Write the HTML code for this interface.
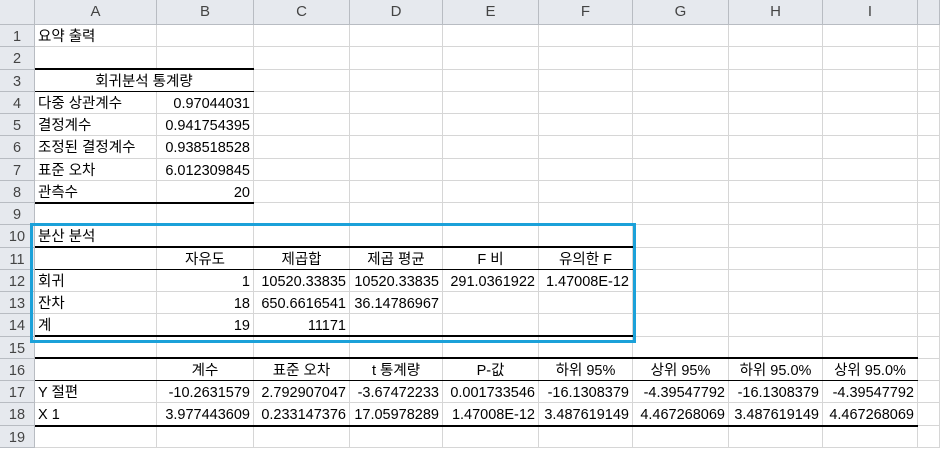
<!DOCTYPE html>
<html><head><meta charset="utf-8"><style>
body{margin:0;width:940px;height:447px;overflow:hidden;background:#fff;position:relative;font-family:"Liberation Sans","Noto Sans CJK KR",sans-serif;font-size:14.5px;color:#000}
.r{position:absolute;left:0;height:22.25px;display:flex}
.c{box-sizing:border-box;height:100%;border-right:1px solid #d6d6d6;border-bottom:1px solid #d6d6d6;padding:0 3px;line-height:25px;white-space:nowrap;overflow:visible}
.h{background:#e6e9ee;color:#444;text-align:center;border-color:#b8bcc2;font-size:15px}
.n{text-align:right}.ct{text-align:center}
.w0{width:35px}.wA{width:122px}.wB{width:97px}.wC{width:96px}.wD{width:93px}.wE{width:96px}.wF{width:94px}.wG{width:96px}.wH{width:94px}.wI{width:95px}.wJ{width:22px}
.rh{background:#e6e9ee;color:#444;text-align:center;border-color:#b8bcc2;padding:0}
.l{position:absolute;background:#000}
</style></head><body>
<div class="r" style="top:0;height:25px"><div class="c h w0"></div><div class="c h wA" style="line-height:24px">A</div><div class="c h wB" style="line-height:24px">B</div><div class="c h wC" style="line-height:24px">C</div><div class="c h wD" style="line-height:24px">D</div><div class="c h wE" style="line-height:24px">E</div><div class="c h wF" style="line-height:24px">F</div><div class="c h wG" style="line-height:24px">G</div><div class="c h wH" style="line-height:24px">H</div><div class="c h wI" style="line-height:24px">I</div><div class="c h wJ"></div></div>

<div class="r" style="top:25px"><div class="c rh w0">1</div><div class="c wA">요약 출력</div><div class="c wB"></div><div class="c wC"></div><div class="c wD"></div><div class="c wE"></div><div class="c wF"></div><div class="c wG"></div><div class="c wH"></div><div class="c wI"></div><div class="c wJ"></div></div>
<div class="r" style="top:47.25px"><div class="c rh w0">2</div><div class="c wA"></div><div class="c wB"></div><div class="c wC"></div><div class="c wD"></div><div class="c wE"></div><div class="c wF"></div><div class="c wG"></div><div class="c wH"></div><div class="c wI"></div><div class="c wJ"></div></div>
<div class="r" style="top:69.5px"><div class="c rh w0">3</div><div class="c wA ct" style="width:219px;overflow:visible">회귀분석 통계량</div><div class="c wC"></div><div class="c wD"></div><div class="c wE"></div><div class="c wF"></div><div class="c wG"></div><div class="c wH"></div><div class="c wI"></div><div class="c wJ"></div></div>
<div class="r" style="top:91.75px"><div class="c rh w0">4</div><div class="c wA">다중 상관계수</div><div class="c wB n">0.97044031</div><div class="c wC"></div><div class="c wD"></div><div class="c wE"></div><div class="c wF"></div><div class="c wG"></div><div class="c wH"></div><div class="c wI"></div><div class="c wJ"></div></div>
<div class="r" style="top:114px"><div class="c rh w0">5</div><div class="c wA">결정계수</div><div class="c wB n">0.941754395</div><div class="c wC"></div><div class="c wD"></div><div class="c wE"></div><div class="c wF"></div><div class="c wG"></div><div class="c wH"></div><div class="c wI"></div><div class="c wJ"></div></div>
<div class="r" style="top:136.25px"><div class="c rh w0">6</div><div class="c wA">조정된 결정계수</div><div class="c wB n">0.938518528</div><div class="c wC"></div><div class="c wD"></div><div class="c wE"></div><div class="c wF"></div><div class="c wG"></div><div class="c wH"></div><div class="c wI"></div><div class="c wJ"></div></div>
<div class="r" style="top:158.5px"><div class="c rh w0">7</div><div class="c wA">표준 오차</div><div class="c wB n">6.012309845</div><div class="c wC"></div><div class="c wD"></div><div class="c wE"></div><div class="c wF"></div><div class="c wG"></div><div class="c wH"></div><div class="c wI"></div><div class="c wJ"></div></div>
<div class="r" style="top:180.75px"><div class="c rh w0">8</div><div class="c wA">관측수</div><div class="c wB n">20</div><div class="c wC"></div><div class="c wD"></div><div class="c wE"></div><div class="c wF"></div><div class="c wG"></div><div class="c wH"></div><div class="c wI"></div><div class="c wJ"></div></div>
<div class="r" style="top:203px"><div class="c rh w0">9</div><div class="c wA"></div><div class="c wB"></div><div class="c wC"></div><div class="c wD"></div><div class="c wE"></div><div class="c wF"></div><div class="c wG"></div><div class="c wH"></div><div class="c wI"></div><div class="c wJ"></div></div>
<div class="r" style="top:225.25px"><div class="c rh w0">10</div><div class="c wA">분산 분석</div><div class="c wB"></div><div class="c wC"></div><div class="c wD"></div><div class="c wE"></div><div class="c wF"></div><div class="c wG"></div><div class="c wH"></div><div class="c wI"></div><div class="c wJ"></div></div>
<div class="r" style="top:247.5px"><div class="c rh w0">11</div><div class="c wA"></div><div class="c wB ct">자유도</div><div class="c wC ct">제곱합</div><div class="c wD ct">제곱 평균</div><div class="c wE ct">F 비</div><div class="c wF ct">유의한 F</div><div class="c wG"></div><div class="c wH"></div><div class="c wI"></div><div class="c wJ"></div></div>
<div class="r" style="top:269.75px"><div class="c rh w0">12</div><div class="c wA">회귀</div><div class="c wB n">1</div><div class="c wC n">10520.33835</div><div class="c wD n">10520.33835</div><div class="c wE n">291.0361922</div><div class="c wF n">1.47008E-12</div><div class="c wG"></div><div class="c wH"></div><div class="c wI"></div><div class="c wJ"></div></div>
<div class="r" style="top:292px"><div class="c rh w0">13</div><div class="c wA">잔차</div><div class="c wB n">18</div><div class="c wC n">650.6616541</div><div class="c wD n">36.14786967</div><div class="c wE"></div><div class="c wF"></div><div class="c wG"></div><div class="c wH"></div><div class="c wI"></div><div class="c wJ"></div></div>
<div class="r" style="top:314.25px"><div class="c rh w0">14</div><div class="c wA">계</div><div class="c wB n">19</div><div class="c wC n">11171</div><div class="c wD"></div><div class="c wE"></div><div class="c wF"></div><div class="c wG"></div><div class="c wH"></div><div class="c wI"></div><div class="c wJ"></div></div>
<div class="r" style="top:336.5px"><div class="c rh w0">15</div><div class="c wA"></div><div class="c wB"></div><div class="c wC"></div><div class="c wD"></div><div class="c wE"></div><div class="c wF"></div><div class="c wG"></div><div class="c wH"></div><div class="c wI"></div><div class="c wJ"></div></div>
<div class="r" style="top:358.75px"><div class="c rh w0">16</div><div class="c wA"></div><div class="c wB ct">계수</div><div class="c wC ct">표준 오차</div><div class="c wD ct">t 통계량</div><div class="c wE ct">P-값</div><div class="c wF ct">하위 95%</div><div class="c wG ct">상위 95%</div><div class="c wH ct">하위 95.0%</div><div class="c wI ct">상위 95.0%</div><div class="c wJ"></div></div>
<div class="r" style="top:381px"><div class="c rh w0">17</div><div class="c wA">Y 절편</div><div class="c wB n">-10.2631579</div><div class="c wC n">2.792907047</div><div class="c wD n">-3.67472233</div><div class="c wE n">0.001733546</div><div class="c wF n">-16.1308379</div><div class="c wG n">-4.39547792</div><div class="c wH n">-16.1308379</div><div class="c wI n">-4.39547792</div><div class="c wJ"></div></div>
<div class="r" style="top:403.25px"><div class="c rh w0">18</div><div class="c wA">X 1</div><div class="c wB n">3.977443609</div><div class="c wC n">0.233147376</div><div class="c wD n">17.05978289</div><div class="c wE n">1.47008E-12</div><div class="c wF n">3.487619149</div><div class="c wG n">4.467268069</div><div class="c wH n">3.487619149</div><div class="c wI n">4.467268069</div><div class="c wJ"></div></div>
<div class="r" style="top:425.5px"><div class="c rh w0">19</div><div class="c wA"></div><div class="c wB"></div><div class="c wC"></div><div class="c wD"></div><div class="c wE"></div><div class="c wF"></div><div class="c wG"></div><div class="c wH"></div><div class="c wI"></div><div class="c wJ"></div></div>

<div class="l" style="left:35px;top:68px;width:219px;height:2px"></div>
<div class="l" style="left:35px;top:90.5px;width:219px;height:1px"></div>
<div class="l" style="left:35px;top:201.5px;width:219px;height:2px"></div>
<div class="l" style="left:35px;top:246px;width:598px;height:2px"></div>
<div class="l" style="left:35px;top:268.5px;width:598px;height:1px"></div>
<div class="l" style="left:35px;top:335px;width:598px;height:2px"></div>
<div class="l" style="left:35px;top:357px;width:883px;height:2px"></div>
<div class="l" style="left:35px;top:380px;width:883px;height:1px"></div>
<div class="l" style="left:35px;top:424.5px;width:883px;height:2px"></div>
<div style="position:absolute;left:30px;top:223px;width:600px;height:114px;border:3px solid #1ba1d9"></div>
</body></html>
